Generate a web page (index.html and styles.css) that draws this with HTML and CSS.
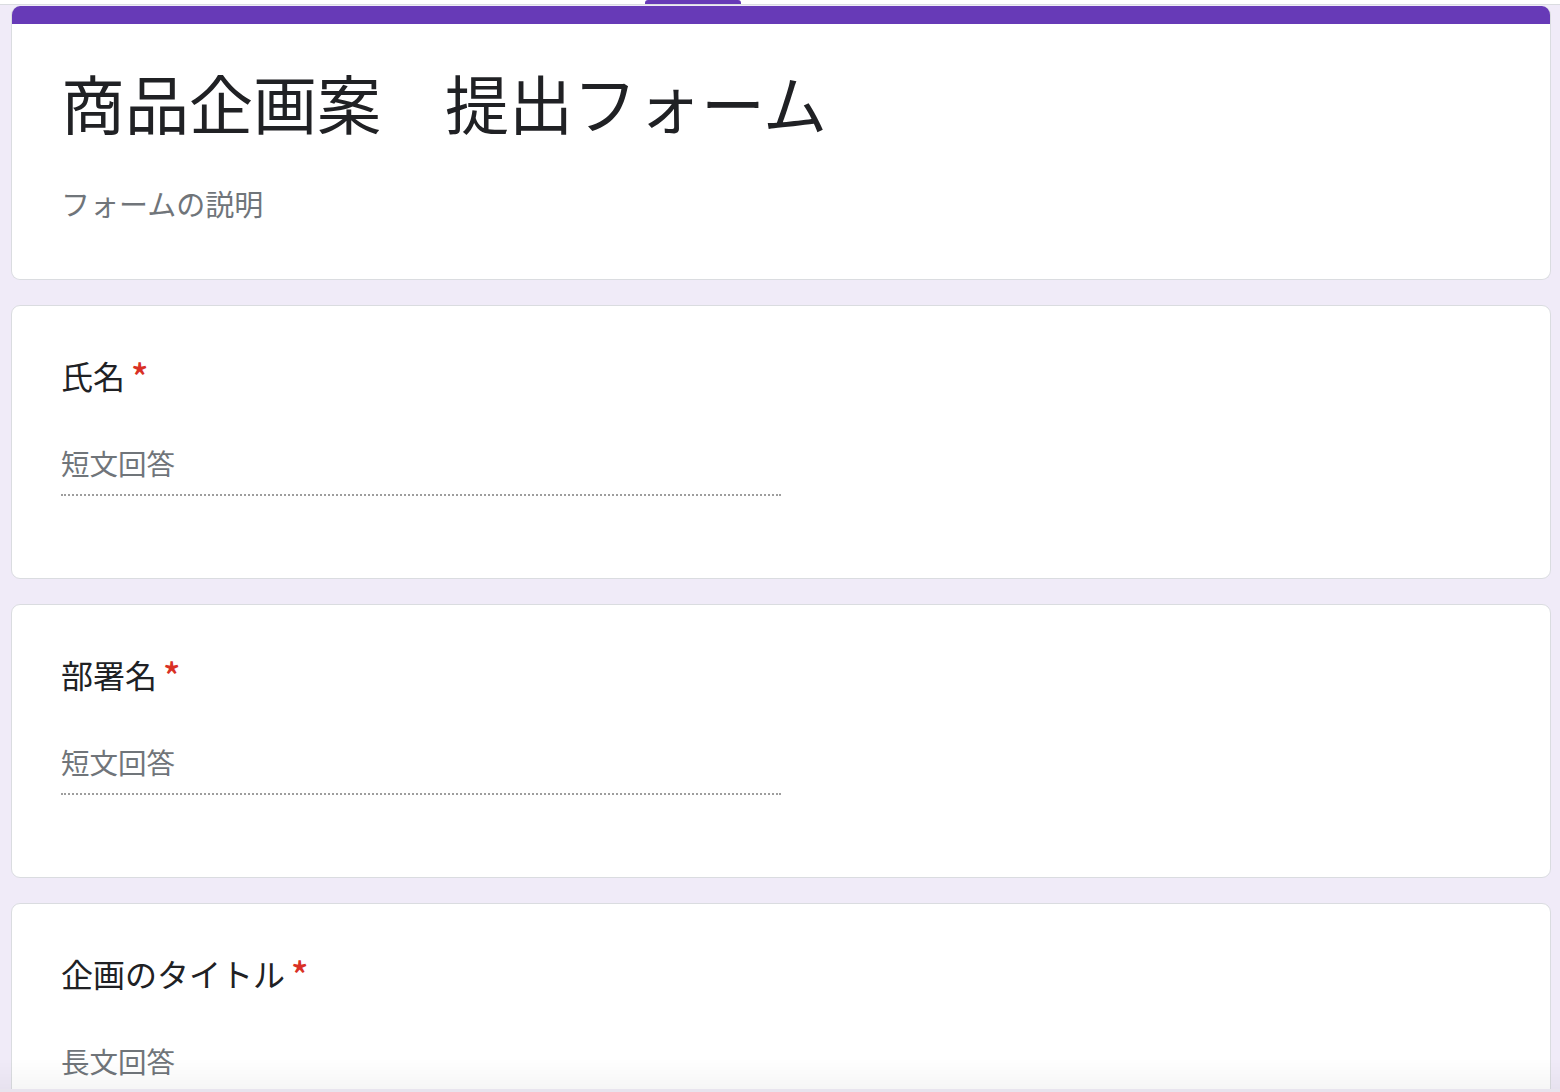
FILE: index.html
```html
<!DOCTYPE html>
<html lang="ja">
<head>
<meta charset="utf-8">
<title>商品企画案　提出フォーム</title>
<link rel="stylesheet" href="styles.css">
</head>
<body>
<div class="topstrip"><span class="tab"></span></div>
<main class="form">
  <section class="card header-card">
    <div class="accent"></div>
    <div class="header-body">
      <h1 class="form-title">商品企画案　提出フォーム</h1>
      <p class="form-desc">フォームの説明</p>
    </div>
  </section>
  <section class="card question">
    <div class="q-title">氏名<span class="req">*</span></div>
    <div class="answer">短文回答</div>
  </section>
  <section class="card question">
    <div class="q-title">部署名<span class="req">*</span></div>
    <div class="answer">短文回答</div>
  </section>
  <section class="card question">
    <div class="q-title">企画のタイトル<span class="req">*</span></div>
    <div class="answer long">長文回答</div>
  </section>
</main>
<div class="bottom-fade"></div>
</body>
</html>
```
FILE: styles.css
```css
html, body {
  margin: 0;
  padding: 0;
  overflow: hidden;
  height: 1092px;
}
body {
  background: #f0ebf8;
  font-family: "Noto Sans CJK JP", "Noto Sans", sans-serif;
  color: #202124;
}
.topstrip {
  height: 4px;
  background: #ffffff;
  border-bottom: 1px solid #dadce0;
  display: flex;
  justify-content: flex-start;
  padding-left: 645px;
}
.tab {
  display: block;
  width: 96px;
  height: 4px;
  background: #673ab7;
  border-radius: 3px 3px 0 0;
}
.form {
  display: flex;
  flex-direction: column;
  gap: 25px;
  width: 1540px;
  margin: 1px 0 0 11px;
}
.card {
  box-sizing: border-box;
  height: 274px;
  background: #ffffff;
  border: 1px solid #dadce0;
  border-radius: 9px;
  flex-shrink: 0;
}
.header-card {
  border-top: none;
  overflow: hidden;
}
.accent {
  height: 18px;
  background: #673ab7;
}
.header-body {
  padding: 37px 48px 0 49px;
}
.form-title {
  margin: 0;
  font-size: 64px;
  font-weight: 400;
  line-height: 80px;
  letter-spacing: 0;
}
.form-desc {
  margin: 42px 0 0;
  font-size: 29px;
  line-height: 40px;
  color: #70757a;
}
.question {
  padding: 45px 48px 0 49px;
}
.q-title {
  font-size: 32px;
  line-height: 48px;
  color: #202124;
  display: flex;
  align-items: flex-start;
}
.req {
  color: #d93025;
  padding-left: 6px;
  margin-top: 4px;
  font-size: 36px;
  line-height: 40px;
  font-weight: 500;
}
.answer {
  margin-top: 44px;
  width: 720px;
  font-size: 28.5px;
  line-height: 40px;
  color: #70757a;
  padding-bottom: 11px;
  border-bottom: 2px dotted rgba(0, 0, 0, 0.38);
}
.answer.long {
  border-bottom: none;
}
.bottom-fade {
  position: fixed;
  left: 0;
  right: 0;
  bottom: 0;
  height: 34px;
  background: linear-gradient(to bottom, rgba(0, 0, 0, 0), rgba(0, 0, 0, 0.035));
  border-bottom: 3px solid #e8e4ee;
  box-sizing: border-box;
  pointer-events: none;
}
```
